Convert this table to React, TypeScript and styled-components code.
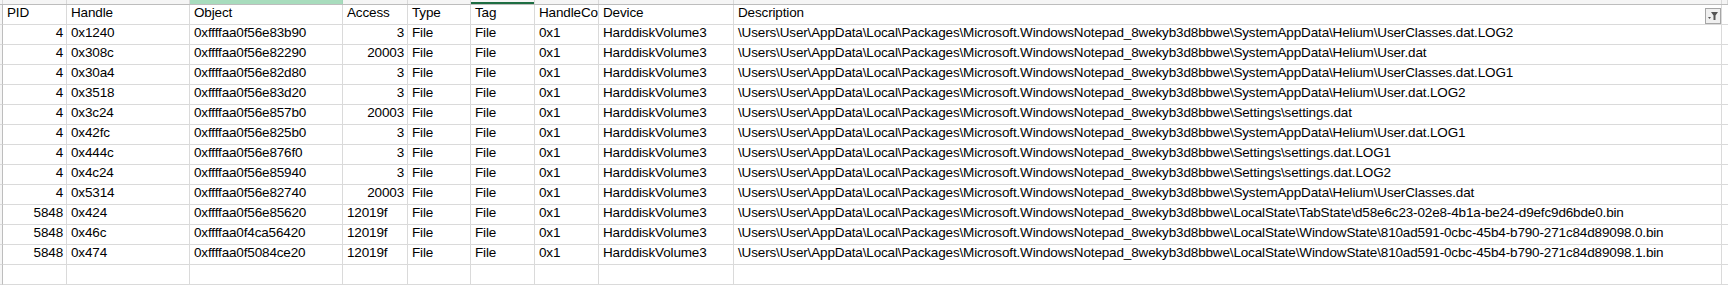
import React from 'react';
import styled, { createGlobalStyle } from 'styled-components';

const GlobalStyle = createGlobalStyle`
  html, body {
    margin: 0;
    padding: 0;
    background: #ffffff;
    overflow: hidden;
  }
  body {
    font-family: "Liberation Sans", Arial, sans-serif;
  }
`;

const COLS = '3px 64px 123px 153px 65px 63px 64px 64px 135px 988px 1fr';

const Sheet = styled.div`
  width: 1728px;
  height: 287px;
  overflow: hidden;
  display: flex;
  flex-direction: column;
  background: #ffffff;
`;

const HeaderStrip = styled.div`
  display: grid;
  grid-template-columns: ${COLS};
  height: 5px;
  flex: none;
  border-bottom: 1px solid #bdbdbd;
  box-sizing: border-box;
  background: #f5f5f5;
`;

const ColHead = styled.div<{ $selected?: boolean; $active?: boolean }>`
  border-right: 1px solid ${(p) => (p.$selected ? '#9fd5b7' : '#d9d9d9')};
  background: ${(p) => (p.$selected ? '#a8dcbd' : 'transparent')};
  box-shadow: ${(p) => (p.$active ? 'inset 0 -2px 0 #1e6e42' : 'none')};
`;

const Row = styled.div`
  display: grid;
  grid-template-columns: ${COLS};
  height: 20px;
  flex: none;
`;

const RowHead = styled.div`
  background: #f5f5f5;
  border-right: 1px solid #bdbdbd;
  border-bottom: 1px solid #d9d9d9;
  box-sizing: border-box;
`;

const Cell = styled.div<{ $align?: 'left' | 'right' }>`
  box-sizing: border-box;
  border-right: 1px solid #dadada;
  border-bottom: 1px solid #dadada;
  padding: 0 3px 3px 4px;
  display: flex;
  align-items: flex-end;
  justify-content: ${(p) => (p.$align === 'right' ? 'flex-end' : 'flex-start')};
  font-size: 13.5px;
  letter-spacing: -0.15px;
  line-height: 16px;
  color: #000000;
  white-space: nowrap;
  overflow: hidden;
  position: relative;
`;

const FilterButton = styled.div`
  position: absolute;
  right: 0;
  top: 3px;
  width: 16px;
  height: 16px;
  box-sizing: border-box;
  border: 1px solid #a6a6a6;
  background: #f0f0f0;
  display: flex;
  align-items: center;
  justify-content: center;
`;

const FilterIcon = () => (
  <svg width="12" height="10" viewBox="0 0 12 10">
    <path d="M4 1h7L8.5 4.5V9h-2V4.5z" fill="#555" />
    <path d="M1 6h3L2.5 8z" fill="#555" />
  </svg>
);

const BASE =
  '\\Users\\User\\AppData\\Local\\Packages\\Microsoft.WindowsNotepad_8wekyb3d8bbwe\\';

type Rec = [string, string, string, string, string];

const data: Rec[] = [
  ['4', '0x1240', '0xffffaa0f56e83b90', '3', 'SystemAppData\\Helium\\UserClasses.dat.LOG2'],
  ['4', '0x308c', '0xffffaa0f56e82290', '20003', 'SystemAppData\\Helium\\User.dat'],
  ['4', '0x30a4', '0xffffaa0f56e82d80', '3', 'SystemAppData\\Helium\\UserClasses.dat.LOG1'],
  ['4', '0x3518', '0xffffaa0f56e83d20', '3', 'SystemAppData\\Helium\\User.dat.LOG2'],
  ['4', '0x3c24', '0xffffaa0f56e857b0', '20003', 'Settings\\settings.dat'],
  ['4', '0x42fc', '0xffffaa0f56e825b0', '3', 'SystemAppData\\Helium\\User.dat.LOG1'],
  ['4', '0x444c', '0xffffaa0f56e876f0', '3', 'Settings\\settings.dat.LOG1'],
  ['4', '0x4c24', '0xffffaa0f56e85940', '3', 'Settings\\settings.dat.LOG2'],
  ['4', '0x5314', '0xffffaa0f56e82740', '20003', 'SystemAppData\\Helium\\UserClasses.dat'],
  ['5848', '0x424', '0xffffaa0f56e85620', '12019f', 'LocalState\\TabState\\d58e6c23-02e8-4b1a-be24-d9efc9d6bde0.bin'],
  ['5848', '0x46c', '0xffffaa0f4ca56420', '12019f', 'LocalState\\WindowState\\810ad591-0cbc-45b4-b790-271c84d89098.0.bin'],
  ['5848', '0x474', '0xffffaa0f5084ce20', '12019f', 'LocalState\\WindowState\\810ad591-0cbc-45b4-b790-271c84d89098.1.bin'],
];

const headers = ['PID', 'Handle', 'Object', 'Access', 'Type', 'Tag', 'HandleCo', 'Device', 'Description'];

const isNumber = (v: string) => /^\d+$/.test(v);

const App: React.FC = () => {
  return (
    <>
      <GlobalStyle />
      <Sheet>
        <HeaderStrip>
          <ColHead />
          {headers.map((h) => (
            <ColHead key={h} $selected={h === 'Object'} $active={h === 'Tag'} />
          ))}
          <ColHead />
        </HeaderStrip>

        <Row>
          <RowHead />
          {headers.map((h) => (
            <Cell key={h}>
              {h}
              {h === 'Description' && (
                <FilterButton>
                  <FilterIcon />
                </FilterButton>
              )}
            </Cell>
          ))}
          <Cell />
        </Row>

        {data.map(([pid, handle, obj, access, desc]) => (
          <Row key={handle}>
            <RowHead />
            <Cell $align="right">{pid}</Cell>
            <Cell>{handle}</Cell>
            <Cell>{obj}</Cell>
            <Cell $align={isNumber(access) ? 'right' : 'left'}>{access}</Cell>
            <Cell>File</Cell>
            <Cell>File</Cell>
            <Cell>0x1</Cell>
            <Cell>HarddiskVolume3</Cell>
            <Cell>{BASE + desc}</Cell>
            <Cell />
          </Row>
        ))}

        <Row>
          <RowHead />
          {headers.map((h) => (
            <Cell key={h} />
          ))}
          <Cell />
        </Row>
      </Sheet>
    </>
  );
};

export default App;
